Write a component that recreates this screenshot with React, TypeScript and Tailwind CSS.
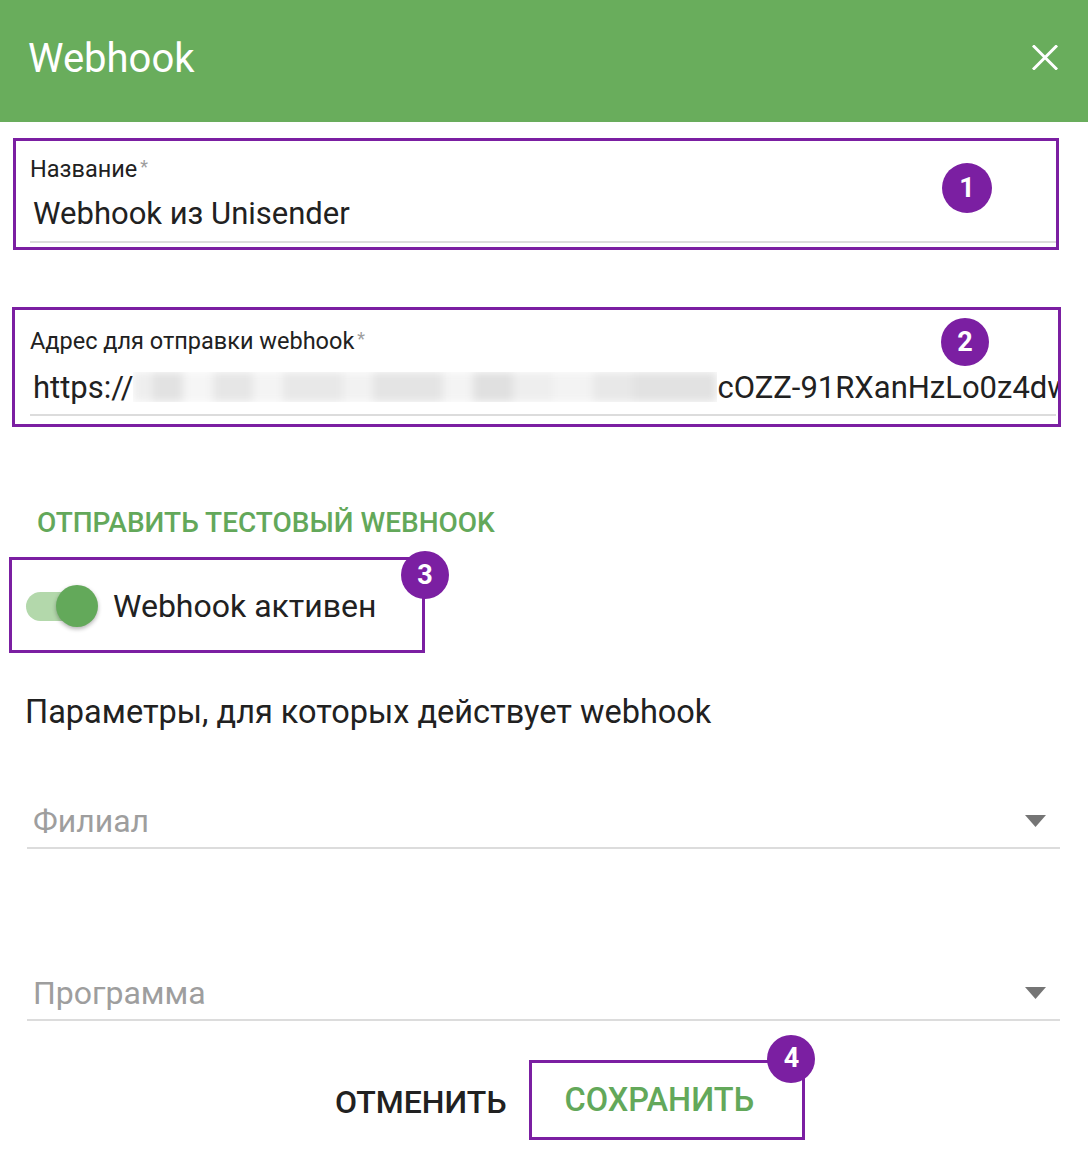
import React from "react";

const Badge = ({ n, className }: { n: string; className: string }) => (
  <div
    className={`absolute rounded-full bg-[#7b1fa2] text-white flex items-center justify-center text-[27px] font-bold ${className}`}
  >
    {n}
  </div>
);

export default function App() {
  return (
    <div
      className="w-[1088px] h-[1164px] bg-white overflow-hidden text-[#212121]"
      style={{ fontFamily: "Roboto, 'Noto Sans', sans-serif" }}
    >
      {/* Header */}
      <div className="h-[122px] bg-[#69ad5c] flex items-center justify-between pl-[28px] pr-[30px]">
        <div className="text-white text-[40px] leading-none pb-[4px]">Webhook</div>
        <svg width="26" height="25" viewBox="0 0 26 25" className="mb-[8px]">
          <path d="M2 1.5 L24 23.5 M24 1.5 L2 23.5" stroke="white" strokeWidth="3" strokeLinecap="square" />
        </svg>
      </div>

      {/* Field 1 */}
      <div className="relative ml-[13px] mt-[16px] w-[1046px] h-[112px] border-[3px] border-[#7b1fa2] pl-[14px]">
        <div className="pt-[17px] text-[23.5px] leading-none text-[#212121]">
          Название<span className="text-[#9e9e9e] text-[18px] align-top ml-[3px]">*</span>
        </div>
        <div className="mt-[16px] pl-[3px] text-[31px] leading-none text-[#212121]">Webhook из Unisender</div>
        <div className="mt-[12px] h-[2px] bg-[#dcdcdc]" />
        <Badge n="1" className="left-[926px] top-[22px] w-[50px] h-[50px]" />
      </div>

      {/* Field 2 */}
      <div className="relative ml-[12px] mt-[57px] w-[1049px] h-[120px] border-[3px] border-[#7b1fa2] pl-[15px]">
        <div className="pt-[20px] text-[23.5px] leading-none text-[#212121]">
          Адрес для отправки webhook<span className="text-[#9e9e9e] text-[18px] align-top ml-[3px]">*</span>
        </div>
        <div className="mt-[18px] pl-[3px] text-[31px] leading-none text-[#212121] whitespace-nowrap overflow-hidden">
          <span>https://</span>
          <span className="inline-block align-middle w-[584px] h-[30px] relative top-[-2px] overflow-hidden">
            <span className="absolute inset-0 flex blur-[4px]">
              <span className="w-[20px] bg-[#eeeeee]" />
              <span className="w-[30px] bg-[#e2e2e2]" />
              <span className="w-[30px] bg-[#f6f6f6]" />
              <span className="w-[40px] bg-[#e6e6e6]" />
              <span className="w-[30px] bg-[#f4f4f4]" />
              <span className="w-[60px] bg-[#e8e8e8]" />
              <span className="w-[30px] bg-[#f2f2f2]" />
              <span className="w-[70px] bg-[#e4e4e4]" />
              <span className="w-[30px] bg-[#f4f4f4]" />
              <span className="w-[40px] bg-[#e0e0e0]" />
              <span className="w-[40px] bg-[#eeeeee]" />
              <span className="w-[40px] bg-[#f3f3f3]" />
              <span className="w-[40px] bg-[#e8e8e8]" />
              <span className="w-[84px] bg-[#e2e2e2]" />
            </span>
          </span>
          <span>cOZZ-91RXanHzLo0z4dw</span>
        </div>
        <div className="mt-[10px] mr-[2px] h-[2px] bg-[#dcdcdc]" />
        <Badge n="2" className="left-[926px] top-[8px] w-[48px] h-[48px]" />
      </div>

      {/* Test webhook */}
      <div className="mt-[82px] ml-[37px] text-[28px] leading-none font-medium text-[#63a85a]">
        ОТПРАВИТЬ ТЕСТОВЫЙ WEBHOOK
      </div>

      {/* Toggle */}
      <div className="relative ml-[9px] mt-[20px] w-[416px] h-[96px] border-[3px] border-[#7b1fa2] flex items-center pl-[14px]">
        <div className="relative w-[70px] h-[29px] rounded-full bg-[#b3d8ab] mt-[2px]">
          <div className="absolute right-[-2px] top-[-7px] w-[42px] h-[42px] rounded-full bg-[#63a95a] shadow-[0_2px_4px_rgba(0,0,0,0.3)]" />
        </div>
        <div className="ml-[17px] text-[32px] leading-none text-[#212121] mt-[2px]">Webhook активен</div>
        <Badge n="3" className="left-[389px] top-[-9px] w-[48px] h-[48px]" />
      </div>

      {/* Params */}
      <div className="mt-[43px] ml-[25px] text-[32.5px] leading-none text-[#212121]">
        Параметры, для которых действует webhook
      </div>

      {/* Select 1 */}
      <div className="mt-[76px] ml-[27px] w-[1033px]">
        <div className="flex items-center justify-between pl-[6px] pr-[14px]">
          <div className="text-[32px] leading-none text-[#9e9e9e]">Филиал</div>
          <svg width="21" height="12" viewBox="0 0 21 12">
            <path d="M0 0 L21 0 L10.5 12 Z" fill="#757575" />
          </svg>
        </div>
        <div className="mt-[10px] h-[2px] bg-[#dcdcdc]" />
      </div>

      {/* Select 2 */}
      <div className="mt-[128px] ml-[27px] w-[1033px]">
        <div className="flex items-center justify-between pl-[6px] pr-[14px]">
          <div className="text-[32px] leading-none text-[#9e9e9e]">Программа</div>
          <svg width="21" height="12" viewBox="0 0 21 12">
            <path d="M0 0 L21 0 L10.5 12 Z" fill="#757575" />
          </svg>
        </div>
        <div className="mt-[10px] h-[2px] bg-[#dcdcdc]" />
      </div>

      {/* Buttons */}
      <div className="mt-[39px] ml-[335px] flex items-center">
        <div className="text-[32px] leading-none font-medium text-[#212121] mt-[4px]">ОТМЕНИТЬ</div>
        <div className="relative ml-[23px] w-[276px] h-[80px] border-[3px] border-[#7b1fa2] flex items-center pl-[32px]">
          <div className="text-[32.5px] leading-none font-medium text-[#63a85a] mt-[2px]">СОХРАНИТЬ</div>
          <Badge n="4" className="left-[235px] top-[-28px] w-[48px] h-[48px]" />
        </div>
      </div>
    </div>
  );
}
